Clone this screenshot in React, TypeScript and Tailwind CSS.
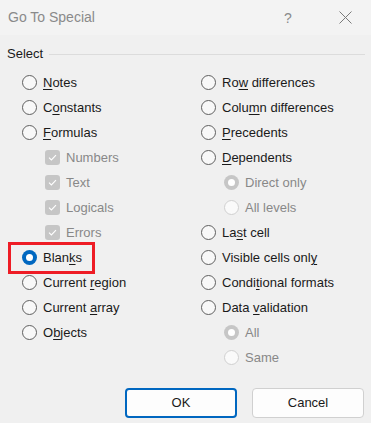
import React from "react";

const font = { fontFamily: '"Liberation Sans", Arial, sans-serif' };

function U({ children }: { children: React.ReactNode }) {
  return <span className="underline underline-offset-[2px] decoration-1">{children}</span>;
}

function Radio({ checked = false }: { checked?: boolean }) {
  if (checked) {
    return (
      <span className="w-[15px] h-[15px] rounded-full bg-[#0067c0] flex items-center justify-center shrink-0">
        <span className="w-[7px] h-[7px] rounded-full bg-white" />
      </span>
    );
  }
  return <span className="w-[15px] h-[15px] rounded-full border border-[#5f5f5f] bg-[#f8f8f8] shrink-0" />;
}

function DisRadio({ checked = false }: { checked?: boolean }) {
  if (checked) {
    return (
      <span className="w-[15px] h-[15px] rounded-full bg-[#c6c6c6] flex items-center justify-center shrink-0">
        <span className="w-[7px] h-[7px] rounded-full bg-white" />
      </span>
    );
  }
  return <span className="w-[15px] h-[15px] rounded-full border border-[#d0d0d0] bg-[#fafafa] shrink-0" />;
}

function Check() {
  return (
    <span className="w-[15px] h-[15px] rounded-[3px] bg-[#c6c6c6] flex items-center justify-center shrink-0">
      <svg width="9" height="7" viewBox="0 0 9 7">
        <path d="M1 3.6 L3.4 6 L8 1.2" fill="none" stroke="#fff" strokeWidth="1.1" />
      </svg>
    </span>
  );
}

function Row({ children, indent = 0 }: { children: React.ReactNode; indent?: number }) {
  return (
    <div className={`h-[25px] flex items-center gap-[6px] ${indent === 1 ? "pl-[23px]" : ""}`}>
      {children}
    </div>
  );
}

export default function App() {
  return (
    <div className="w-[371px] h-[423px] bg-[#f0f0f0] text-[13px] text-[#1a1a1a] overflow-hidden" style={font}>
      <div className="h-[35px] bg-[#f3f3f3] flex items-center pl-[8px] relative">
        <span className="text-[#8a8a8a] text-[14px]">Go To Special</span>
        <span className="absolute left-[284px] top-[8px] text-[#8a8a8a] text-[14px]">?</span>
        <svg className="absolute left-[339px] top-[11px]" width="13" height="13" viewBox="0 0 13 13">
          <path d="M0.5 0.5 L12.5 12.5 M12.5 0.5 L0.5 12.5" stroke="#7a7a7a" strokeWidth="1" />
        </svg>
      </div>
      <div className="flex items-center h-[35px] pl-[7px] pr-[6px] pt-[3px]">
        <span>Select</span>
        <div className="flex-1 h-px bg-[#dcdcdc] ml-[6px]" />
      </div>
      <div className="flex">
        <div className="w-[179px] pl-[22px] flex flex-col">
          <Row><Radio /><span><U>N</U>otes</span></Row>
          <Row><Radio /><span>C<U>o</U>nstants</span></Row>
          <Row><Radio /><span><U>F</U>ormulas</span></Row>
          <Row indent={1}><Check /><span className="text-[#888]">Numbers</span></Row>
          <Row indent={1}><Check /><span className="text-[#888]">Text</span></Row>
          <Row indent={1}><Check /><span className="text-[#888]">Logicals</span></Row>
          <Row indent={1}><Check /><span className="text-[#888]">Errors</span></Row>
          <div className="relative">
            <Row><Radio checked /><span>Blan<U>k</U>s</span></Row>
            <div className="absolute left-[-14px] top-[-3px] w-[87px] h-[32px] border-[3px] border-[#ee1c25] pointer-events-none" />
          </div>
          <Row><Radio /><span>Current <U>r</U>egion</span></Row>
          <Row><Radio /><span>Current <U>a</U>rray</span></Row>
          <Row><Radio /><span>O<U>b</U>jects</span></Row>
        </div>
        <div className="flex-1 pl-[22px] flex flex-col">
          <Row><Radio /><span>Ro<U>w</U> differences</span></Row>
          <Row><Radio /><span>Colu<U>m</U>n differences</span></Row>
          <Row><Radio /><span><U>P</U>recedents</span></Row>
          <Row><Radio /><span><U>D</U>ependents</span></Row>
          <Row indent={1}><DisRadio checked /><span className="text-[#888]">Direct only</span></Row>
          <Row indent={1}><DisRadio /><span className="text-[#888]">All levels</span></Row>
          <Row><Radio /><span>La<U>s</U>t cell</span></Row>
          <Row><Radio /><span>Visible cells onl<U>y</U></span></Row>
          <Row><Radio /><span>Condi<U>t</U>ional formats</span></Row>
          <Row><Radio /><span>Data <U>v</U>alidation</span></Row>
          <Row indent={1}><DisRadio checked /><span className="text-[#888]">All</span></Row>
          <Row indent={1}><DisRadio /><span className="text-[#888]">Same</span></Row>
        </div>
      </div>
      <div className="flex justify-end gap-[15px] pr-[7px] mt-[18px]">
        <button className="w-[112px] h-[30px] rounded-[4px] border-2 border-[#0067c0] bg-[#fdfdfd] text-[13px]">OK</button>
        <button className="w-[112px] h-[30px] rounded-[4px] border border-[#d0d0d0] bg-[#fdfdfd] text-[13px]">Cancel</button>
      </div>
    </div>
  );
}
